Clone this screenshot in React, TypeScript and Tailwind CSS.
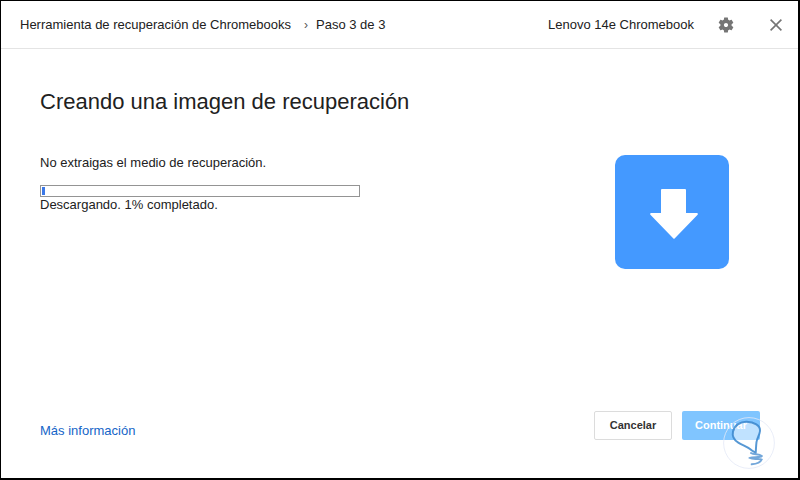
import React from 'react';

const GearIcon = () => (
  <svg width="18" height="18" viewBox="0 0 24 24" className="text-[#757575] block" fill="currentColor">
    <path d="M19.43 12.98c.04-.32.07-.64.07-.98s-.03-.66-.07-.98l2.11-1.65c.19-.15.24-.42.12-.64l-2-3.46c-.12-.22-.39-.3-.61-.22l-2.49 1c-.52-.4-1.08-.73-1.69-.98l-.38-2.65C14.46 2.18 14.25 2 14 2h-4c-.25 0-.46.18-.49.42l-.38 2.65c-.61.25-1.17.59-1.69.98l-2.49-1c-.23-.09-.49 0-.61.22l-2 3.46c-.13.22-.07.49.12.64l2.11 1.65c-.04.32-.07.65-.07.98s.03.66.07.98l-2.11 1.65c-.19.15-.24.42-.12.64l2 3.46c.12.22.39.3.61.22l2.49-1c.52.4 1.08.73 1.69.98l.38 2.65c.03.24.24.42.49.42h4c.25 0 .46-.18.49-.42l.38-2.65c.61-.25 1.17-.59 1.69-.98l2.49 1c.23.09.49 0 .61-.22l2-3.46c.12-.22.07-.49-.12-.64l-2.11-1.65zM12 14.8c-1.55 0-2.8-1.25-2.8-2.8s1.25-2.8 2.8-2.8 2.8 1.25 2.8 2.8-1.25 2.8-2.8 2.8z" />
  </svg>
);

const CloseIcon = () => (
  <svg width="12" height="12" viewBox="0 0 12 12" fill="none" stroke="#757575" strokeWidth="1.6" className="block">
    <path d="M0.6 0.6 L11.4 11.4 M11.4 0.6 L0.6 11.4" />
  </svg>
);

const DownloadTile = () => (
  <div className="w-[114px] h-[114px] rounded-[10px] bg-[#4499ff]">
    <svg width="114" height="114" viewBox="0 0 114 114" className="block">
      <path d="M47 34 H70 A1 1 0 0 1 71 35 V58 H82 A1 1 0 0 1 82.6 59.7 L59.6 83.6 A1 1 0 0 1 58.4 83.6 L35.4 59.7 A1 1 0 0 1 36 58 H46 V35 A1 1 0 0 1 47 34 Z" fill="#ffffff" />
    </svg>
  </div>
);

const Watermark = () => (
  <svg width="52" height="52" viewBox="0 0 52 52" fill="none" className="absolute left-[722px] top-[416px]">
    <circle cx="26" cy="26" r="25.4" stroke="#e3e9f6" strokeWidth="0.8" />
    <path
      d="M15.3 25.7 C11 23 9 19 10 14.5 C11.5 8 17.5 4.5 23.7 4.7 C31 5 37.5 8.5 37 14 C36.6 18 34 21 33.5 25 C33 29 33 32 32.7 35.7 C30.5 34.5 28.5 33.5 27 32 C23.5 29.5 19 28 15.3 25.7 Z"
      fill="#ffffff"
      fillOpacity="0.5"
      stroke="#3a86cc"
      strokeOpacity="0.85"
      strokeWidth="2"
      strokeLinejoin="round"
    />
    <path
      d="M28 36 C31 38 36 36.5 38.7 39 C37 41 30 39.5 27 41 C30 43 36.5 41 38.7 42.5 C37.5 45.5 32 47 28.7 47.3"
      stroke="#5a98d4"
      strokeOpacity="0.85"
      strokeWidth="2"
      strokeLinecap="round"
    />
  </svg>
);

export default function App() {
  return (
    <div className="relative w-[800px] h-[480px] bg-white border-t border-l border-r-2 border-b-2 border-black overflow-hidden font-['Liberation_Sans',Arial,sans-serif] text-[#212121] flex flex-col">
      <header className="h-[48px] shrink-0 border-b border-[#e4e4e4] flex items-center pl-[19px] pr-[16px] text-[13px]">
        <span>Herramienta de recuperación de Chromebooks</span>
        <span className="ml-[13px] mr-[8px] text-[#555] text-[12px]">›</span>
        <span>Paso 3 de 3</span>
        <span className="ml-auto">Lenovo 14e Chromebook</span>
        <span className="ml-[23px]"><GearIcon /></span>
        <span className="ml-[35px]"><CloseIcon /></span>
      </header>

      <main className="flex-1 flex flex-col pl-[39px] pr-[38px]">
        <h1 className="mt-[40px] text-[22px] leading-[26px] font-normal">Creando una imagen de recuperación</h1>

        <div className="flex justify-between">
          <div className="mt-[40px] w-[320px] text-[13px]">
            <p className="leading-[16px]">No extraigas el medio de recuperación.</p>
            <div className="mt-[14px] h-[12px] border border-[#949494] p-px">
              <div className="w-[3px] h-full bg-[#3b78e7]" />
            </div>
            <p className="leading-[16px]">Descargando. 1% completado.</p>
          </div>
          <div className="mt-[40px] mr-[31px]">
            <DownloadTile />
          </div>
        </div>

        <footer className="mt-auto mb-[38px] flex items-start justify-between">
          <a className="mt-[12px] text-[13px] leading-[16px] text-[#1565c8]">Más información</a>
          <div className="flex gap-[10px]">
            <button className="w-[78px] h-[29px] rounded-[2px] border border-[#dcdcdc] bg-white text-[11px] font-bold text-[#333]">Cancelar</button>
            <button className="w-[78px] h-[29px] rounded-[2px] bg-[#80c5ff] text-[11px] font-bold text-white">Continuar</button>
          </div>
        </footer>
      </main>
      <Watermark />
    </div>
  );
}
